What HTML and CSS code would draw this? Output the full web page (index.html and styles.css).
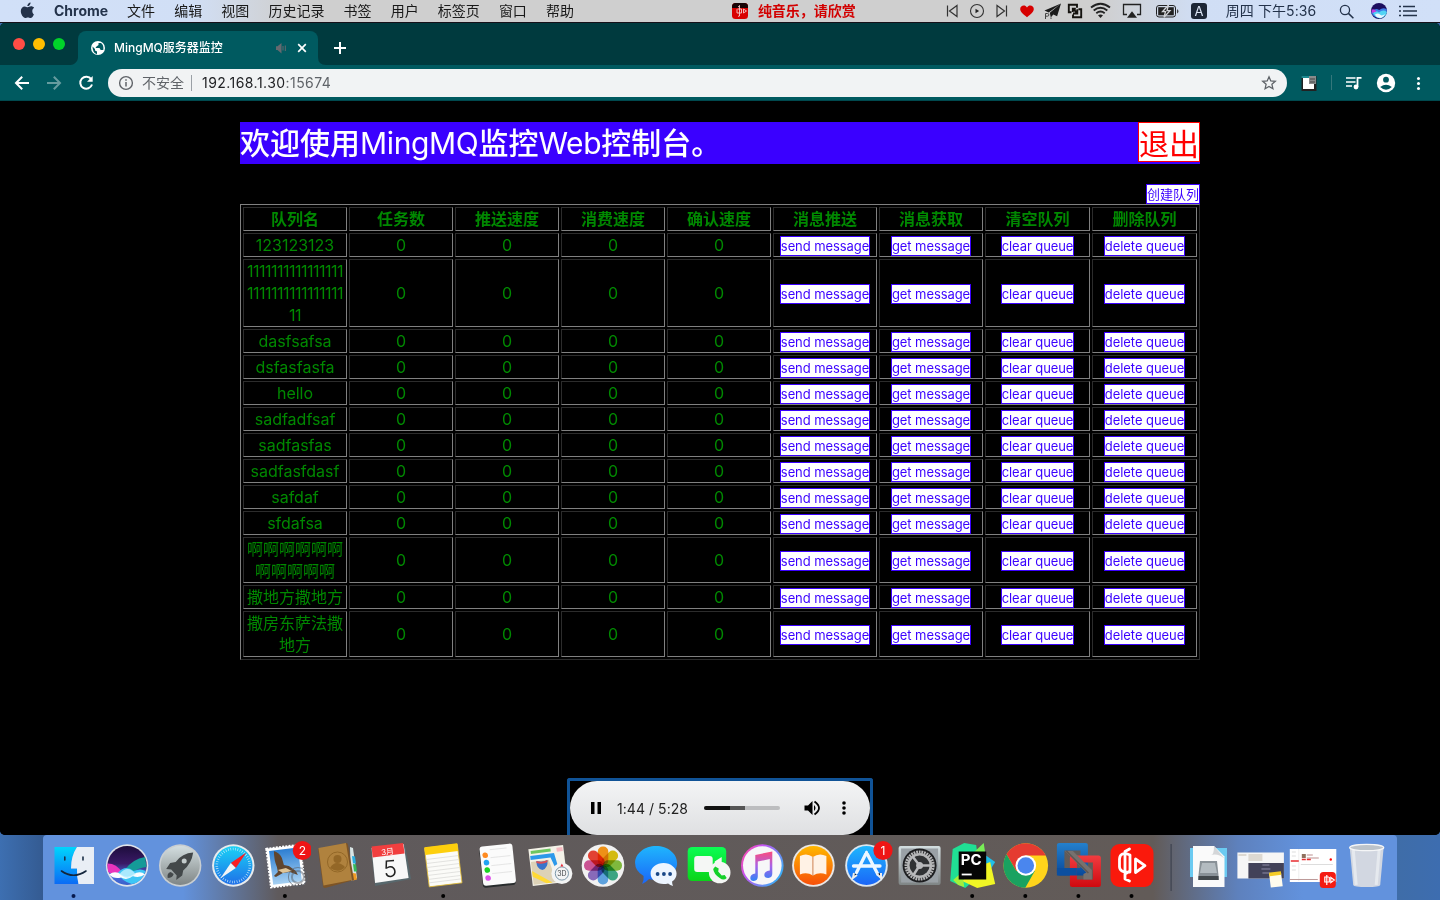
FILE: index.html
```html
<!DOCTYPE html>
<html lang="zh-CN">
<head>
<meta charset="utf-8">
<title>MingMQ服务器监控</title>
<link rel="stylesheet" href="styles.css">
</head>
<body>
<div class="desktop">
<header class="menubar">
  <svg class="apple" width="54" height="22" viewBox="0 0 54 22"><path fill="#23324a" d="M30.600 2.400c.2 1.900-1.500 3.800-3.300 3.700-.2-1.800 1.600-3.600 3.300-3.700zM33.900 14.500c-.8 1.900-1.900 3.600-3.400 3.600-1 0-1.400-.6-2.600-.6s-1.600.6-2.600.6c-2.200 0-4.500-3.900-4.500-7 0-3 2-4.700 3.900-4.700 1.200 0 2.300.8 3 .8.7 0 1.900-.9 3.400-.9 1 0 2.300.5 3 1.500-2.500 1.400-2.200 5.300-.2 6.700z"/></svg>
  <nav class="menus"><b class="app">Chrome</b><span>文件</span><span>编辑</span><span>视图</span><span>历史记录</span><span>书签</span><span>用户</span><span>标签页</span><span>窗口</span><span>帮助</span></nav>
  <div class="song">
    <svg width="16" height="22" viewBox="732 0 16 22"><rect x="732" y="3" width="16" height="16" rx="3.500" fill="#d90000"/><path d="M732 8V6.500a3.500 3.500 0 0 1 3.500-3.500h9a3.500 3.500 0 0 1 3.500 3.500V8z" fill="#180406"/><path d="M739.500 5.500v10.500M737 9.500v3.500h4.500v-4h-4zM743.500 9v4l3-2zM738 7l2-1.500M738 16.500l2-1" fill="none" stroke="#f5c9c9" stroke-width=".9"/></svg>
    <span>纯音乐，请欣赏</span>
  </div>
  <div class="status">
    <svg width="24" height="22" viewBox="940 0 24 22"><path d="M947.500 5.500v11M957 5.500v11l-7.500-5.500z" fill="none" stroke="#333" stroke-width="1.200"/></svg>
    <svg width="26" height="22" viewBox="964 0 26 22"><circle cx="977" cy="11" r="6.500" fill="none" stroke="#333" stroke-width="1.100"/><path d="M975.500 8.800v4.400l3.600-2.200z" fill="#222"/></svg>
    <svg width="24" height="22" viewBox="990 0 24 22"><path d="M1006.500 5.500v11M997 5.500v11l7.500-5.500z" fill="none" stroke="#333" stroke-width="1.200"/></svg>
    <svg width="26" height="22" viewBox="1014 0 26 22"><path d="M1027 17.300c-4-3.300-6.800-5.500-6.800-8.300 0-4 5.200-4.700 6.800-1.500 1.600-3.200 6.800-2.500 6.800 1.500 0 2.800-2.800 5-6.800 8.300z" fill="#d60000"/></svg>
    <svg width="24" height="22" viewBox="1040 0 24 22"><path d="M1061 3.500l-16.500 7 4.200 2zM1061 3.500l-11.200 9.300 1 4.700 2.500-3 3.800 1.700z" fill="#1b1b1b"/><path d="M1045.500 19v-5.500h2a1.300 1.300 0 0 1 0 2.700h-2M1051 17.500v1.500" stroke="#444" fill="none"/></svg>
    <svg width="22" height="22" viewBox="1064 0 22 22"><path d="M1071.500 12.300h-2.700v-7.500h8.200v3M1078.500 9.200h2.700v8h-8.200v-2.700M1072.700 8.500l4.500 4.500M1073 13.500h4.300V9.200M1072.800 12V8.700h3" fill="none" stroke="#15130f" stroke-width="1.900"/></svg>
    <svg width="28" height="22" viewBox="1086 0 28 22"><g fill="none" stroke="#222" stroke-width="1.900"><path d="M1091 7.600q9.500-7.500 19 0M1093.700 10.400q6.800-5.400 13.600 0M1096.300 13.200q4.200-3.300 8.400 0"/></g><path d="M1098 15.300q2.500-1.800 5 0l-2.500 2.700z" fill="#222"/></svg>
    <svg width="36" height="22" viewBox="1114 0 36 22"><path d="M1127 14.500h-3.500v-10h17v10h-3.500" fill="none" stroke="#222" stroke-width="1.300"/><path d="M1132 11.300l5 6.400h-10z" fill="#222"/></svg>
    <svg width="34" height="22" viewBox="1150 0 34 22"><rect x="1156.500" y="5.500" width="19" height="11.500" rx="2.500" fill="none" stroke="#222"/><rect x="1158.200" y="7.200" width="15.600" height="8.100" fill="#222"/><path d="M1168.500 5l-6 6.700h3l-1.500 5.500 6-6.500h-3z" fill="#222" stroke="#d0d2d6" stroke-width="1.300"/><path d="M1177.200 9v4.500q2.500-2.200 0-4.500z" fill="#222"/></svg>
    <span class="ime">A</span>
    <span class="clock">周四 下午5:36</span>
    <svg width="36" height="22" viewBox="1328 0 36 22"><circle cx="1345" cy="10" r="4.600" fill="none" stroke="#23324a" stroke-width="1.300"/><path d="M1348.400 13.400l5 4.800" stroke="#23324a" stroke-width="1.500"/></svg>
    <svg width="30" height="22" viewBox="1364 0 30 22"><circle cx="1379" cy="11" r="8" fill="#1b0d5e"/><path d="M1371.200 12q4-5 8-2 4-3 7.700-.5a8 8 0 0 1-15.700 2.500z" fill="#3d7de8"/><path d="M1373 13q3-3 6-.5 4-3.500 8-.5-1 5-7 6.500-5-1-7-5.500z" fill="#52d4f4"/><path d="M1375 14.500q3-2 5 0t5-.5q-2 4-5 4-4-.5-5-3.500z" fill="#edf6ff"/><path d="M1371.500 10q2-2 5 1.500l-4.500 1.500z" fill="#c83be0"/></svg>
    <svg width="28" height="22" viewBox="1394 0 28 22"><path d="M1399 6.500h2M1399 11h2M1399 15.500h2M1403 6.500h12M1403 11h14M1403 15.500h14" stroke="#23324a" stroke-width="1.700"/></svg>
  </div>
</header>

<main class="window">
  <div class="tabstrip">
    <div class="lights"><i class="red"></i><i class="yellow"></i><i class="green"></i></div>
    <div class="tab">
      <svg width="14" height="14" viewBox="0 0 14 14"><circle cx="7" cy="7" r="7" fill="#fff"/><path d="M1.500 5.500l2.500 2.500v1.500l2 1v2.700Q1.500 12 1.500 5.500zM7.500 2v2l-2 1.500-1 1.500h4l1.200 2h2.600Q13 4 10 2z" fill="#005a60"/></svg>
      <span class="title">MingMQ服务器监控</span>
      <svg class="mute" width="12" height="12" viewBox="0 0 12 12"><path d="M1 4.200h1.500L6.500 1v10.500L2.500 8H1z" fill="#66696f"/><path d="M8 4v4.500M10.300 3.500v5.500" stroke="#66696f"/></svg>
      <svg class="close" width="10" height="10" viewBox="0 0 10 10"><path d="M1.200 1.200l7.600 7.600M8.800 1.200L1.200 8.800" stroke="#fff" stroke-width="1.700"/></svg>
    </div>
    <svg width="8" height="8" viewBox="0 0 8 8"><path d="M0 0q0 8 8 8H0z" fill="#005a60"/></svg>
    <svg class="plus" width="12" height="12" viewBox="0 0 12 12"><path d="M6 0v12M0 6h12" stroke="#fff" stroke-width="2"/></svg>
  </div>
  <div class="toolbar">
    <svg width="108" height="37" viewBox="0 65 108 37" fill="none" stroke="#fff" stroke-width="2"><path d="M29 83H16.500M22.200 76.800L16 83l6.200 6.200"/><path d="M47 83h12.500M53.800 76.800L60 83l-6.200 6.200" opacity=".4"/><path d="M91.200 79.200A6 6 0 1 0 92 84.500"/><path d="M92.700 76v5.700H87z" fill="#fff" stroke="none"/></svg>
    <div class="omnibox">
      <svg width="16" height="16" viewBox="0 0 16 16"><circle cx="8" cy="8" r="6.400" fill="none" stroke="#5f6368" stroke-width="1.400"/><path d="M8 7v4.500M8 4.300v1.500" stroke="#5f6368" stroke-width="1.500"/></svg>
      <span class="insecure">不安全</span>
      <span class="url">192.168.1.30<em>:15674</em></span>
      <svg class="star" width="16" height="16" viewBox="0 0 16 16"><path d="M8 1.800l1.800 4.100 4.500.4-3.400 3 1 4.400L8 11.400l-3.900 2.300 1-4.400-3.400-3 4.500-.4z" fill="none" stroke="#5f6368" stroke-width="1.300"/></svg>
    </div>
    <svg width="153" height="37" viewBox="1287 65 153 37"><path d="M1301.500 76h15v15h-15z" fill="#222"/><path d="M1301.500 76h8v2h-8z" fill="#1b8990"/><path d="M1303 78h6v11h-6zM1309 84h5v5h-5z" fill="#fff"/><path d="M1309 76h7v8h-7z" fill="#888b8c"/><path d="M1310 79h5M1310 82h5" stroke="#444"/><path d="M1331.500 75v15" stroke="#34777b"/><path d="M1346 78h9.500M1346 82h9.500M1346 86h6" stroke="#fff" stroke-width="1.600"/><path d="M1357.500 87v-9.200h4" stroke="#fff" stroke-width="1.800" fill="none"/><circle cx="1356" cy="87" r="2.400" fill="#fff"/><circle cx="1386" cy="83" r="9.200" fill="#fff"/><circle cx="1386" cy="79.700" r="2.900" fill="#005a60"/><path d="M1380.200 87q5.800-4.600 11.600 0-5.800 5.500-11.600 0z" fill="#005a60"/><g fill="#fff"><circle cx="1418.500" cy="78.500" r="1.500"/><circle cx="1418.500" cy="83.500" r="1.500"/><circle cx="1418.500" cy="88.500" r="1.500"/></g></svg>
  </div>
  <div class="page">
    <div class="content">
      <div class="banner"><span class="welcome">欢迎使用<span class="latin">MingMQ</span>监控<span class="latin web">Web</span>控制台。</span><a class="logout">退出</a></div>
      <div class="actions"><a class="btn">创建队列</a></div>
      <table class="queues">
        <thead><tr><th>队列名</th><th>任务数</th><th>推送速度</th><th>消费速度</th><th>确认速度</th><th>消息推送</th><th>消息获取</th><th class="wide">清空队列</th><th class="wide">删除队列</th></tr></thead>
        <tbody>
        <tr><td class="num">123123123</td><td>0</td><td>0</td><td>0</td><td>0</td><td><a class="btn send">send message</a></td><td><a class="btn get">get message</a></td><td><a class="btn clear">clear queue</a></td><td><a class="btn del">delete queue</a></td></tr>
        <tr><td class="ones">1111111111111111<br>1111111111111111<br>11</td><td>0</td><td>0</td><td>0</td><td>0</td><td><a class="btn send">send message</a></td><td><a class="btn get">get message</a></td><td><a class="btn clear">clear queue</a></td><td><a class="btn del">delete queue</a></td></tr>
        <tr><td>dasfsafsa</td><td>0</td><td>0</td><td>0</td><td>0</td><td><a class="btn send">send message</a></td><td><a class="btn get">get message</a></td><td><a class="btn clear">clear queue</a></td><td><a class="btn del">delete queue</a></td></tr>
        <tr><td>dsfasfasfa</td><td>0</td><td>0</td><td>0</td><td>0</td><td><a class="btn send">send message</a></td><td><a class="btn get">get message</a></td><td><a class="btn clear">clear queue</a></td><td><a class="btn del">delete queue</a></td></tr>
        <tr><td>hello</td><td>0</td><td>0</td><td>0</td><td>0</td><td><a class="btn send">send message</a></td><td><a class="btn get">get message</a></td><td><a class="btn clear">clear queue</a></td><td><a class="btn del">delete queue</a></td></tr>
        <tr><td>sadfadfsaf</td><td>0</td><td>0</td><td>0</td><td>0</td><td><a class="btn send">send message</a></td><td><a class="btn get">get message</a></td><td><a class="btn clear">clear queue</a></td><td><a class="btn del">delete queue</a></td></tr>
        <tr><td>sadfasfas</td><td>0</td><td>0</td><td>0</td><td>0</td><td><a class="btn send">send message</a></td><td><a class="btn get">get message</a></td><td><a class="btn clear">clear queue</a></td><td><a class="btn del">delete queue</a></td></tr>
        <tr><td>sadfasfdasf</td><td>0</td><td>0</td><td>0</td><td>0</td><td><a class="btn send">send message</a></td><td><a class="btn get">get message</a></td><td><a class="btn clear">clear queue</a></td><td><a class="btn del">delete queue</a></td></tr>
        <tr><td>safdaf</td><td>0</td><td>0</td><td>0</td><td>0</td><td><a class="btn send">send message</a></td><td><a class="btn get">get message</a></td><td><a class="btn clear">clear queue</a></td><td><a class="btn del">delete queue</a></td></tr>
        <tr><td>sfdafsa</td><td>0</td><td>0</td><td>0</td><td>0</td><td><a class="btn send">send message</a></td><td><a class="btn get">get message</a></td><td><a class="btn clear">clear queue</a></td><td><a class="btn del">delete queue</a></td></tr>
        <tr><td>啊啊啊啊啊啊<br>啊啊啊啊啊</td><td>0</td><td>0</td><td>0</td><td>0</td><td><a class="btn send">send message</a></td><td><a class="btn get">get message</a></td><td><a class="btn clear">clear queue</a></td><td><a class="btn del">delete queue</a></td></tr>
        <tr><td>撒地方撒地方</td><td>0</td><td>0</td><td>0</td><td>0</td><td><a class="btn send">send message</a></td><td><a class="btn get">get message</a></td><td><a class="btn clear">clear queue</a></td><td><a class="btn del">delete queue</a></td></tr>
        <tr><td>撒房东萨法撒<br>地方</td><td>0</td><td>0</td><td>0</td><td>0</td><td><a class="btn send">send message</a></td><td><a class="btn get">get message</a></td><td><a class="btn clear">clear queue</a></td><td><a class="btn del">delete queue</a></td></tr>
        </tbody>
      </table>
    </div>
    <div class="player-frame">
      <div class="player">
        <svg width="10" height="12" viewBox="0 0 10 12"><path d="M0 0h3.500v12H0zM6.500 0H10v12H6.500z"/></svg>
        <span class="time">1:44 / 5:28</span>
        <span class="track"><i></i><b></b></span>
        <svg class="vol" width="17" height="16" viewBox="0 0 17 16"><path d="M.5 5.500h3.500L8.500 1v14L4 10.500H.5z"/><path d="M10 5q3 3 0 6" /><path d="M10.500 1.500q9 6.500 0 13" fill="none" stroke="#000" stroke-width="1.800"/></svg>
        <svg class="dots" width="4" height="14" viewBox="0 0 4 14"><circle cx="2" cy="2" r="1.800"/><circle cx="2" cy="7" r="1.800"/><circle cx="2" cy="12" r="1.800"/></svg>
      </div>
    </div>
  </div>
</main>

<footer class="dock">
<svg class="app-icon" viewBox="46.500 835 52.900 65"><defs>
<linearGradient id="finder" x2="0" y2="1"><stop stop-color="#00d5fd"/><stop offset="1" stop-color="#0b6bf5"/></linearGradient>
<linearGradient id="silver" x2="0" y2="1"><stop stop-color="#d3dee0"/><stop offset="1" stop-color="#7f8585"/></linearGradient>
<linearGradient id="sky" x2="0" y2="1"><stop stop-color="#2c7ed2"/><stop offset="1" stop-color="#a6d0f2"/></linearGradient>
<linearGradient id="blue" x2="0" y2="1"><stop stop-color="#1fb6fd"/><stop offset="1" stop-color="#1a66f8"/></linearGradient>
<linearGradient id="safari" x2="0" y2="1"><stop stop-color="#1ad2f6"/><stop offset="1" stop-color="#1f6fe8"/></linearGradient>
<linearGradient id="green" x2="0" y2="1"><stop stop-color="#0cfd54"/><stop offset="1" stop-color="#0ad319"/></linearGradient>
<linearGradient id="orange" x2="0" y2="1"><stop stop-color="#ffb700"/><stop offset="1" stop-color="#f7500a"/></linearGradient>
<linearGradient id="note" x2="0" y2="1"><stop stop-color="#fb4c7c"/><stop offset=".5" stop-color="#a861e8"/><stop offset="1" stop-color="#2e83f6"/></linearGradient>
<linearGradient id="ring" x1="0" y1=".2" x2="1" y2=".8"><stop stop-color="#fb4aa8"/><stop offset=".3" stop-color="#c554f3"/><stop offset="1" stop-color="#29b7f6"/></linearGradient>
<linearGradient id="siri" x2="0" y2="1"><stop stop-color="#1d0d3c"/><stop offset=".45" stop-color="#3a1a66"/><stop offset=".75" stop-color="#4a6fe0"/><stop offset="1" stop-color="#3a60c8"/></linearGradient>
<linearGradient id="vmblue" x2="0" y2="1"><stop stop-color="#2480cc"/><stop offset="1" stop-color="#08489a"/></linearGradient>
<linearGradient id="vmred" x2="0" y2="1"><stop stop-color="#f03c40"/><stop offset="1" stop-color="#cf0a10"/></linearGradient>
</defs>
<path d="M54 847h22.500q-6 9-6 21.500h6q-.5 8 1.500 15.500H54z" fill="url(#finder)"/><path d="M76.500 847H93.500v37H78q-2-7.500-1.500-15.500h-6q0-12.500 6-21.500z" fill="#e9eef5"/><path d="M64.300 857v3M82.500 857v3" stroke="#1c3048" stroke-width="1.600" stroke-linecap="round"/><path d="M61 871q12 8.500 24.500 0" fill="none" stroke="#14263c" stroke-width="1.600" stroke-linecap="round"/><circle cx="73" cy="896" r="2" fill="#071a4e"/></svg>
<svg class="app-icon" viewBox="99.400 835 52.900 65"><circle cx="126.500" cy="865.500" r="21.200" fill="#dfe3ea"/><circle cx="126.500" cy="865.500" r="19.600" fill="url(#siri)"/><path d="M107 863.500q9 0 15 9.500-8 3-14.500-1-1-5-.5-8.500z" fill="#e934bd"/><path d="M124 870q8-11 20.500-13l1.500 10q-9 1-13 5z" fill="#159a98"/><path d="M117 873q8-9 16-2 7-3 12 0-4 12-14 13-10-3-14-11z" fill="#3fc6f5"/><path d="M108.500 874.500q6-4.500 12 0t12 0q7-4.500 12 0-6 4-12.500 1.500-5.500 5-11.500 1.500-7 2-12-3z" fill="#fafdff"/><path d="M119 874q8-10 16 0-8 8-16 0z" fill="#c5f1ff" opacity=".8"/></svg>
<svg class="app-icon" viewBox="152.300 835 52.900 65"><circle cx="179.500" cy="865.500" r="21.200" fill="#c9ced1"/><circle cx="179.500" cy="865.500" r="19.600" fill="url(#silver)"/><path d="M192.500 852.500q-11 .5-17.500 9.500l-5.500 1-4 6 5 .5 5.500 6-.5 4.500 6-4.500 1-5q8.500-7 10-18z" fill="#43484a"/><circle cx="183.500" cy="861" r="2.500" fill="#c3cbcc"/><path d="M170 872q-4 1-3 6 5 0 6-4z" fill="#43484a"/></svg>
<svg class="app-icon" viewBox="205.200 835 52.900 65"><circle cx="232.500" cy="865.500" r="21.200" fill="#e8ebed"/><circle cx="232.500" cy="865.500" r="19.200" fill="url(#safari)"/><circle cx="232.500" cy="865.500" r="16.500" fill="none" stroke="#d3edfa" stroke-width="2.600" stroke-dasharray=".6 1.800"/><path d="M245.500 852.500l-15.500 10.500 5 5z" fill="#fa1e22"/><path d="M219.500 878.500L230 863l5 5z" fill="#f3f4f5"/></svg>
<svg class="app-icon" viewBox="258.100 835 52.900 65"><g transform="rotate(-7 285 865)"><rect x="267.500" y="846.500" width="34" height="39" fill="#fff" stroke="#fff" stroke-width="2" stroke-dasharray="2 1.200"/><rect x="270" y="849" width="29" height="34" fill="url(#sky)"/></g><path d="M273 851q6 2 8 7l2 7 5 1 7 5 2 4-8-3-7 1-7 4-2-1 4-4-1-5q-3-7-3-16z" fill="#60452e"/><path d="M277 870l8-2 6 3-9 2z" fill="#dfc598"/><circle cx="297" cy="877" r="9.500" fill="none" stroke="#56606c" opacity=".65"/><circle cx="297" cy="877" r="6" fill="none" stroke="#56606c" opacity=".5" stroke-width="2"/><circle cx="301.500" cy="850.500" r="9.600" fill="#ef1515"/><text x="301.500" y="855" class="count">2</text><circle cx="284" cy="896" r="2"/></svg>
<svg class="app-icon" viewBox="311 835 52.900 65"><path d="M350 847l3 1 4 30-6 3z" fill="#d9e5e5"/><path d="M352 856l3 .5 1 7h-3z" fill="#29aee0"/><path d="M353 864l3 .5 1 7h-3z" fill="#35b95a"/><path d="M353 873l3 .5 1 6-4 1z" fill="#ef9b25"/><path d="M318 849l28-6q2 0 2 2l6 35-29 8q-2 0-2-2z" fill="#7d5426"/><path d="M318.500 848l27.500-5 6 37-28.500 5.500z" fill="#b0823e"/><circle cx="337.500" cy="862" r="10" fill="none" stroke="#936727"/><circle cx="337.500" cy="859" r="4" fill="#936727"/><path d="M330 868q3-5 7-5t8 4q-6 7-15 1z" fill="#936727"/></svg>
<svg class="app-icon" viewBox="363.900 835 52.900 65"><path d="M371 850l34-5 6 34-36 7z" fill="#58686d"/><path d="M371.500 848l32-4 5 34-33.500 5z" fill="#f8f8f8"/><path d="M371.500 846.500l31.500-3.500 1.500 10.500-32 4z" fill="#f13f3f"/><text x="387.500" y="854.500" class="month" transform="rotate(-6 388 852)">3月</text><text x="390" y="877" class="day" transform="rotate(-5 390 870)">5</text></svg>
<svg class="app-icon" viewBox="416.800 835 52.900 65"><g transform="rotate(-7 443 865)"><rect x="426.500" y="846" width="33" height="39" fill="#fbfbf8" stroke="#e3be35" stroke-width=".8"/><rect x="426.500" y="845" width="33" height="8" fill="#fdcf0d"/><path d="M427 857.500h32M427 861.500h32M427 865.500h32M427 869.500h32M427 873.500h32M427 877.500h32M427 881h32" stroke="#d9d9d6" stroke-width=".7"/></g><circle cx="443" cy="896" r="2"/></svg>
<svg class="app-icon" viewBox="469.700 835 52.900 65"><g transform="rotate(-6 497 865)"><rect x="480.500" y="847" width="33" height="39.500" rx="3" fill="#282c2d"/><rect x="481" y="845" width="33" height="39.500" rx="3" fill="#fbfbfb"/><circle cx="486" cy="854" r="2.800" fill="#ff8b21"/><circle cx="486.500" cy="861.500" r="2.800" fill="#20a4f3"/><circle cx="486.500" cy="869" r="2.800" fill="#19d425"/><circle cx="486.500" cy="877" r="2.800" fill="#dc50e9"/><path d="M491 849h17M491 857h20M491 865h20M491 873h20" stroke="#ddd" stroke-width=".7"/></g></svg>
<svg class="app-icon" viewBox="522.600 835 52.900 65"><g transform="rotate(-7 547 865)"><rect x="530" y="847" width="35" height="37" fill="#f4f2e8"/><path d="M532 849h20v3h-20z" fill="#6dc660"/><path d="M531 854h24l5 29-6-16-3-9h-20z" fill="#2c99ea"/><path d="M531 860h18l5 23h-23z" fill="#ddd2b7"/><path d="M531 869l19 14h-6l-13-8z" fill="#ffd936"/><path d="M558 849h6v4h-6z" fill="#f6b9c0"/></g><path d="M536 861q6 2 11-1 1 8-5 10-6-1-6-9z" fill="#3974cb"/><path d="M536 861q6 2 11-1v2q-5 3-11 1z" fill="#df4e53"/><circle cx="561.500" cy="873.500" r="10.500" fill="#f3f4f4"/><circle cx="561.500" cy="873.500" r="6.600" fill="none" stroke="#5e8297" stroke-width=".8"/><text x="561.500" y="876.500" class="three">3D</text><path d="M561.500 863.500l-1.500 3h3z" fill="#e92d36"/></svg>
<svg class="app-icon" viewBox="575.500 835 52.900 65"><circle cx="602.500" cy="865.500" r="21.300" fill="#f1f1f1"/><g class="petals"><rect x="597.300" y="846.500" width="10.500" height="19" rx="5" fill="#fc9a18"/><rect x="597.300" y="846.500" width="10.500" height="19" rx="5" fill="#e0c512" transform="rotate(45 602.500 865.500)"/><rect x="597.300" y="846.500" width="10.500" height="19" rx="5" fill="#86c440" transform="rotate(90 602.500 865.500)"/><rect x="597.300" y="846.500" width="10.500" height="19" rx="5" fill="#3fae88" transform="rotate(135 602.500 865.500)"/><rect x="597.300" y="846.500" width="10.500" height="19" rx="5" fill="#62aaea" transform="rotate(180 602.500 865.500)"/><rect x="597.300" y="846.500" width="10.500" height="19" rx="5" fill="#9070c4" transform="rotate(225 602.500 865.500)"/><rect x="597.300" y="846.500" width="10.500" height="19" rx="5" fill="#d6589c" transform="rotate(270 602.500 865.500)"/><rect x="597.300" y="846.500" width="10.500" height="19" rx="5" fill="#f04436" transform="rotate(315 602.500 865.500)"/></g></svg>
<svg class="app-icon" viewBox="628.400 835 52.900 65"><path d="M655.500 846c11.500 0 21 7.500 21 17s-9.500 17-21 17q-4 0-7-1-4 4-7 5 2-4 1.500-8-8.500-5-8.500-13c0-9.500 9.500-17 21-17z" fill="url(#blue)"/><path d="M663 863c7 0 13 5 13 10.500q0 5-4.500 8 0 3 1 4.500-3-1-5-2.500-2 .5-4.500.5c-7 0-13-4.500-13-10.500s6-10.500 13-10.500z" fill="#edf5ff"/><g fill="#194787"><circle cx="657" cy="874" r="1.900"/><circle cx="663.300" cy="874" r="1.900"/><circle cx="669.500" cy="874" r="1.900"/></g></svg>
<svg class="app-icon" viewBox="681.300 835 52.900 65"><rect x="687" y="847" width="38.500" height="34" rx="4.500" fill="url(#green)"/><rect x="693.500" y="856" width="18.500" height="16" rx="3" fill="#f5f7f5"/><path d="M714 861.500l7-4.500v14l-7-4z" fill="#f5f7f5"/><circle cx="719" cy="872.500" r="10.800" fill="#f4f6f4"/><path d="M714.500 866.500l3.500 2-.5 3 3.500 4 3-.5 2 3q-3 3-7 0-6-4-6.500-9z" fill="#15d02a"/></svg>
<svg class="app-icon" viewBox="734.200 835 52.900 65"><circle cx="761.500" cy="865.500" r="21.300" fill="url(#ring)"/><circle cx="761.500" cy="865.500" r="19.300" fill="#f7f7f8"/><path d="M754.500 855l17-3.500v22q0 4-4 4.500-4 0-4-3 0-4 5.500-4.500v-11.500l-12 2.500v15q0 4-4 4.500-3.500 0-3.500-3 0-4 5-4.500z" fill="url(#note)"/></svg>
<svg class="app-icon" viewBox="787.100 835 52.900 65"><circle cx="813.500" cy="865.500" r="21.300" fill="#e9e7e6"/><circle cx="813.500" cy="865.500" r="19.400" fill="url(#orange)"/><path d="M800 856q7-3.500 13 1 6-4.500 13.500-1v18.500q-7-3-13.500 1-6-4-13-1z" fill="#fff2e5"/><path d="M813 857v18.500" stroke="#ce8252"/></svg>
<svg class="app-icon" viewBox="840 835 52.900 65"><circle cx="866.500" cy="865.500" r="21.300" fill="#dce6ee"/><circle cx="866.500" cy="865.500" r="19.400" fill="url(#blue)"/><g stroke="#ecf7ff" stroke-width="3.300" stroke-linecap="round"><path d="M866.500 852.500l-10 20M866.500 852.500l11.500 22M853.500 866h26.500"/></g><path d="M854 873l-1 5 4-3M877 874l4 4v-5" stroke="#eee" stroke-width="2"/><circle cx="883" cy="850.500" r="9.600" fill="#ef1515"/><text x="883" y="855" class="count">1</text></svg>
<svg class="app-icon" viewBox="892.900 835 52.900 65"><rect x="898.500" y="846" width="42" height="39" rx="2" fill="url(#silver)"/><rect x="901" y="848.500" width="37" height="34" fill="#9aa1a6"/><circle cx="919.500" cy="865.500" r="17" fill="#1d1e20"/><circle cx="919.500" cy="865.500" r="13.500" fill="none" stroke="#b5b6b7" stroke-width="3.200" stroke-dasharray="1.800 .8"/><circle cx="919.500" cy="865.500" r="11.300" fill="#303234" stroke="#b5b6b7" stroke-width="2.500"/><path d="M919.500 865.500l-7-9M919.500 865.500h11M919.500 865.500l-6.500 10" stroke="#b9babc" stroke-width="2.500"/><circle cx="919.500" cy="865.500" r="3.500" fill="#b9babc"/></svg>
<svg class="app-icon" viewBox="945.800 835 52.900 65"><path d="M952.500 849l11.500-6 12 2 4 30-15 13-15-7z" fill="#20df94"/><path d="M974 852l9.500-9 2 13-9 8z" fill="#79ee57"/><path d="M985 855l10 7-9 14z" fill="#20bfe9"/><path d="M985 864l5-2 5 22-18 4-15-7 6-7z" fill="#f0f625"/><path d="M953 880l9-8 2 15-6-2z" fill="#a6ee3b"/><rect x="958.500" y="851.500" width="27.500" height="28" fill="#050505"/><text x="971" y="865.500" class="pc">PC</text><path d="M961.500 874.500h10" stroke="#fff" stroke-width="1.800"/><circle cx="972" cy="896" r="2"/></svg>
<svg class="app-icon" viewBox="998.700 835 52.900 65"><circle cx="1025.500" cy="865.500" r="22.300" fill="#ffd41b"/><path d="M1006.200 854.300A22.300 22.300 0 0 1 1045.500 855.500H1025.500L1016 871z" fill="#e53b31"/><path d="M1006.200 854.300A22.300 22.300 0 0 0 1025 887.800L1034.500 871H1016z" fill="#1aa260"/><circle cx="1025.500" cy="865.500" r="10.300" fill="#fff"/><circle cx="1025.500" cy="865.500" r="8.300" fill="#4a86ee"/><circle cx="1025" cy="896" r="2"/></svg>
<svg class="app-icon" viewBox="1051.600 835 52.900 65"><path fill-rule="evenodd" d="M1059 843h26q2.500 0 2.500 2.500V873q0 2.500-2.500 2.500h-26q-2.500 0-2.500-2.500v-27.500q0-2.500 2.500-2.500zm5 7.500v17.500h16v-17.500z" fill="url(#vmblue)"/><path fill-rule="evenodd" d="M1072 855.500h26q2.500 0 2.500 2.500v26.500q0 2.500-2.500 2.500h-26q-2.500 0-2.500-2.500V858q0-2.500 2.500-2.500zm4.500 7v17h16v-17z" fill="url(#vmred)"/><path d="M1056.500 868h20v7.500h-20z" fill="#0b4fa0"/><path d="M1064.500 851h8l19 19v9.500h-8.500v-5.500l3-1.500-20-20z" fill="#77716e"/><path d="M1066 851l22 22" stroke="#5d5855" stroke-width="1.500"/><circle cx="1078" cy="896" r="2"/></svg>
<svg class="app-icon" viewBox="1104.500 835 52.900 65"><rect x="1110" y="844" width="43" height="43" rx="9" fill="#fa190c"/><g fill="none" stroke="#fff" stroke-width="2.800" stroke-linejoin="round" stroke-linecap="round"><path d="M1124.500 855v19l5-3v-16q-10-4-10.500 4v8q.5 6 10.500 5M1124.500 857v-5.500l4.500-2.500M1124.500 874v5l4.500 2M1135 859v13.500l9.500-6.800z"/></g><circle cx="1131" cy="896" r="2"/></svg>
<svg class="divider" viewBox="1157.400 835 24.600 65"><path d="M1170.500 844v47" stroke="#363b49"/></svg>
<svg class="doc-icon" viewBox="1182 835 52.600 65"><path d="M1190 848h37v29h-37z" fill="#6bcaf1"/><path d="M1193 846h21l10.500 10.500V887H1193z" fill="#fafafa"/><path d="M1214 846q0 9-3 9 7-2 13.500 3.500z" fill="#d4d6d8"/><path d="M1200 861h17l2 19h-21z" fill="#899197"/><path d="M1202 863h13l2 10h-17z" fill="#b3bbc0"/><path d="M1198.500 876h20v4h-20z" fill="#42484c"/></svg>
<svg class="doc-icon" viewBox="1234.600 835 52.600 65"><rect x="1237" y="852.500" width="46.500" height="26" fill="#f6f6f6"/><path d="M1238 854h8v2h-8zM1248 854h14v7h-14z" fill="#ddd9d2"/><rect x="1248" y="863" width="35.500" height="15.500" fill="#424259"/><path d="M1262 865h7M1261 869h9M1262 873h8" stroke="#8e8ca8"/><g transform="rotate(-7 1275 880)"><rect x="1269.500" y="873" width="12" height="14" fill="#fffced"/><rect x="1269.500" y="872" width="12" height="3.500" fill="#f5cc25"/></g></svg>
<svg class="doc-icon" viewBox="1287.200 835 52.600 65"><rect x="1290" y="849" width="46.500" height="33" fill="#fff"/><path d="M1299 849v32" stroke="#eee"/><path d="M1302 854h4v4h-4z" fill="#8f705e"/><path d="M1307 855h6M1307 858h12" stroke="#bc8f8f"/><path d="M1291 861h8M1302 859.500h4M1307 859.500h4" stroke="#e72d30" stroke-width="1.400"/><path d="M1301 864.500h32M1292 852h4M1292 856h4M1292 866h4M1292 870h4" stroke="#ddd"/><path d="M1290 879.500h28" stroke="#bd9998"/><circle cx="1331" cy="859.500" r="1.200" fill="red"/><rect x="1320" y="872" width="16" height="16" rx="3.500" fill="#f51b12"/><path d="M1327 875v10M1329 877h-4v5h4.500v-5M1331 877.500v5l3.500-2.500z" fill="none" stroke="#fff" stroke-width="1.200"/></svg>
<svg class="doc-icon" viewBox="1339.800 835 52.600 65"><path d="M1349.500 847h34l-3.500 38q-.5 2-13.500 2t-13.500-2z" fill="#dadde1" opacity=".93"/><path d="M1353 849l3 36M1379 849l-3 36" stroke="#f3f5f7" stroke-width="3" opacity=".6"/><ellipse cx="1366.500" cy="847.500" rx="17" ry="3.200" fill="#bcc3ca" stroke="#f5f6f7" stroke-width="1.300"/></svg>
</footer>
</div>
</body>
</html>
```
FILE: styles.css
```css
* { box-sizing: border-box; }
body { margin: 0; font-family: Inter, "Noto Sans CJK SC", sans-serif; }
svg { display: block; flex: none; }
i, em { font-style: normal; }

.desktop {
  width: 1440px; height: 900px; overflow: hidden;
  display: flex; flex-direction: column;
  background: linear-gradient(90deg, #3d6fb1, #345b92 43px, #3f6da8 1397px, #3d6db0);
}

.menubar {
  height: 23px; flex: none; display: flex; align-items: flex-start;
  border-bottom: 1px solid #151019;
  background: linear-gradient(90deg, #d1e0f8 0, #d1dff6 190px, #cfcfcf 290px, #cfcfcf 1100px, #d0def5 1200px, #d1e0f8);
  color: #191919; font-size: 14px; line-height: 22px; white-space: nowrap;
}
.menus { display: flex; gap: 19.12px; }
.menus .app { width: 54px; color: #23324a; font-weight: 700; }
.song { margin-left: 157.900px; display: flex; gap: 10px; color: #d20000; font-weight: 700; }
.status { margin-left: auto; padding-right: 18px; display: flex; }
.ime { width: 16px; height: 16px; margin: 3px 7px; border-radius: 3px; background: #1c2636; color: #dce5f5; line-height: 16px; text-align: center; font-size: 13px; }
.clock { width: 114px; text-align: center; color: #23324a; letter-spacing: .1px; }

.window {
  height: 812px; flex: none; display: flex; flex-direction: column;
  border-radius: 5px; overflow: hidden; background: #000;
}
.tabstrip { height: 42px; flex: none; display: flex; align-items: flex-end; background: linear-gradient(#003a3e 32px, transparent 32px) 0 0 / 70px 42px no-repeat, #003a3e; }
.lights { width: 78px; height: 42px; padding: 15px 0 0 13px; display: flex; gap: 8px; background: radial-gradient(circle at 0 0, #003a3e 7.500px, #005a60 8.500px) 70px 34px / 8px 8px no-repeat; }
.lights i { width: 12px; height: 12px; border-radius: 50%; }
.red { background: #ff4d45; }
.yellow { background: #ffbe00; }
.green { background: #00d32a; }
.tab { width: 240px; height: 34px; padding: 0 11px 0 13px; display: flex; align-items: center; border-radius: 8px 8px 0 0; background: #005a60; color: #fff; }
.title { margin-left: 9px; font-size: 12px; font-weight: 500; line-height: 16px; white-space: nowrap; }
.mute { margin-left: auto; }
.close { margin-left: 10px; }
.plus { margin: 0 0 11px 8px; }
.toolbar { height: 36px; flex: none; display: flex; align-items: flex-start; background: #005a60; border-bottom: 1px solid #00494e; }
.omnibox { flex: 1; height: 28px; margin-top: 4px; padding: 0 10px; display: flex; align-items: center; border-radius: 14px; background: #f1f3f4; font-size: 14px; line-height: 20px; }
.insecure { margin-left: 8px; width: 50px; height: 16px; line-height: 16px; color: #5f6368; border-right: 1px solid #9aa0a6; }
.url { margin-left: 10px; color: #202124; letter-spacing: .45px; }
.url em { color: #5f6368; }
.star { margin-left: auto; }

.page { flex: 1; display: flex; flex-direction: column; justify-content: space-between; align-items: center; padding-top: 21px; background: #000; }
.content { width: 960px; }
.banner { height: 42px; display: flex; justify-content: space-between; background: #3a00ff; color: #fff; font-size: 30px; line-height: 42px; font-weight: 500; }
.latin { font-weight: 400; letter-spacing: -.35px; }
.web { letter-spacing: -.4px; }
.logout { width: 62px; height: 40px; border: 1px solid #f00; background: #fff; color: #f00; line-height: 42px; text-align: center; font-weight: 400; white-space: nowrap; }
.actions { height: 40px; padding-top: 20px; }
.btn { display: flex; justify-content: center; height: 20px; margin: 2px auto 0; border: 1px solid #3a00ff; background: #fff; color: #3a00ff; font-size: 13px; line-height: 19px; white-space: nowrap; }
.actions .btn { width: 54px; margin: 0 0 0 auto; }
.send { width: 90px; letter-spacing: -.08px; }
.get { width: 80px; letter-spacing: -.08px; }
.clear { width: 73px; letter-spacing: -.1px; }
.del { width: 81px; letter-spacing: -.05px; }
.queues { width: 960px; table-layout: fixed; border: 1px solid; border-color: #808080 #2c2c2c #2c2c2c #808080; border-spacing: 2px; color: #008800; font-size: 16px; line-height: 22px; }
.queues th, .queues td { padding: 0; border: 1px solid; border-color: #2c2c2c #808080 #808080 #2c2c2c; text-align: center; white-space: nowrap; }
.queues th { width: 104px; font-weight: 700; }
.queues .wide { width: 105px; }
.queues .ones { letter-spacing: -.5px; }

.player-frame { width: 306px; height: 57px; border: 3px solid #105397; border-bottom: 0; border-radius: 3px 3px 0 0; }
.player { height: 54px; padding: 0 24px 0 21px; display: flex; align-items: center; border-radius: 27px; background: linear-gradient(#f3f4f5, #dfe0e2); color: #222; font-size: 14px; }
.time { width: 74px; margin-left: 16px; white-space: nowrap; letter-spacing: .05px; }
.track { width: 76px; height: 4px; margin-left: 13px; display: flex; border-radius: 2px; overflow: hidden; background: #bcbdbf; }
.track i { width: 26px; background: #111; }
.track b { width: 15px; background: #555; }
.vol { margin-left: auto; }
.dots { margin-left: 21px; }

.dock {
  width: 1354px; height: 65px; flex: none; margin-left: 43px; padding-left: 4px;
  display: flex; border-radius: 4px 4px 0 0;
  background: linear-gradient(90deg, #6292dd 0, #6292dd 140px, #5f5a5c 235px, #625b58 1110px, #5e81bd 1195px, #6292dd 1260px);
}
.app-icon { width: 52.9px; height: 65px; }
.divider { width: 24.6px; height: 65px; }
.doc-icon { width: 52.6px; height: 65px; }
.petals rect { mix-blend-mode: multiply; }
.count { fill: #fff; font-size: 12px; text-anchor: middle; }
.month { fill: #fff; font-size: 8px; text-anchor: middle; }
.day { fill: #222; font-size: 23px; font-weight: 300; text-anchor: middle; }
.three { fill: #42474a; font-size: 7px; text-anchor: middle; }
.pc { fill: #fff; font-size: 15px; font-weight: 700; text-anchor: middle; }
```
